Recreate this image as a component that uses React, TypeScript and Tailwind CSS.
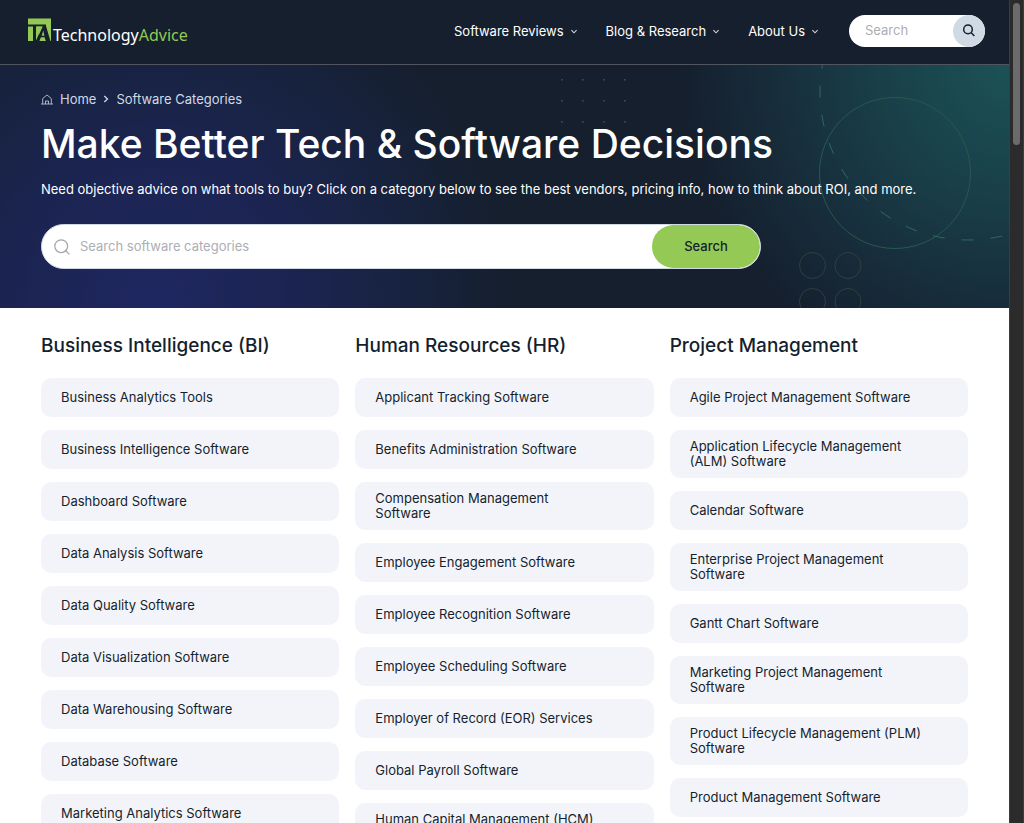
import React from "react";

type Column = { title: string; items: string[] };

const columns: Column[] = [
  {
    title: "Business Intelligence (BI)",
    items: [
      "Business Analytics Tools",
      "Business Intelligence Software",
      "Dashboard Software",
      "Data Analysis Software",
      "Data Quality Software",
      "Data Visualization Software",
      "Data Warehousing Software",
      "Database Software",
      "Marketing Analytics Software",
    ],
  },
  {
    title: "Human Resources (HR)",
    items: [
      "Applicant Tracking Software",
      "Benefits Administration Software",
      "Compensation Management\nSoftware",
      "Employee Engagement Software",
      "Employee Recognition Software",
      "Employee Scheduling Software",
      "Employer of Record (EOR) Services",
      "Global Payroll Software",
      "Human Capital Management (HCM) Software",
    ],
  },
  {
    title: "Project Management",
    items: [
      "Agile Project Management Software",
      "Application Lifecycle Management (ALM) Software",
      "Calendar Software",
      "Enterprise Project Management Software",
      "Gantt Chart Software",
      "Marketing Project Management Software",
      "Product Lifecycle Management (PLM) Software",
      "Product Management Software",
    ],
  },
];

const navItems = ["Software Reviews", "Blog & Research", "About Us"];

function Logo() {
  return (
    <a href="#" aria-label="TechnologyAdvice" className="flex items-start gap-px">
      <svg width="24" height="24" viewBox="0 0 24 24">
        <path d="M0 0.5H23V23H0Z" fill="#93c954" />
        <g fill="#151f2e">
          <path d="M0 6.6H18V8.6H8V23H5V8.6H0Z" />
          <path fillRule="evenodd" d="M15 8L8 23H11.6L13 19.4H16.6L17.6 23H22.4L18 8ZM13.7 17.8L15.3 12.6L16.4 17.8Z" />
          <path d="M8 23L11 16V23Z" />
        </g>
        <path d="M8.4 8.6H13.6L8.4 20Z" fill="#93c954" />
        <path d="M11.6 23L13 19.4H16.6L17.6 23Z" fill="#93c954" />
      </svg>
      <span className="mt-[5px] font-['Noto_Sans',sans-serif] text-base leading-6 text-white">
        Technology<span className="text-[#93c954]">Advice</span>
      </span>
    </a>
  );
}

function Chevron() {
  return (
    <svg width="8" height="8" viewBox="0 0 8 8" fill="none" stroke="#d5d8dc" strokeWidth="1.1">
      <path d="M1.4 3.2L4 5.8L6.6 3.2" />
    </svg>
  );
}

function Header() {
  return (
    <header className="flex h-[65px] items-start border-b border-[#50555f] bg-[#151f2e] pr-6 pl-7">
      <div className="mt-[18px]">
        <Logo />
      </div>
      <div className="mt-[15px] ml-auto flex items-center gap-[30px]">
        <nav className="flex items-center gap-7">
          {navItems.map((label) => (
            <button key={label} type="button" className="flex items-center gap-[6px] text-[13px] leading-5 text-white">
              {label}
              <Chevron />
            </button>
          ))}
        </nav>
        <form className="flex h-8 w-[136px] overflow-hidden rounded-full bg-white">
          <input
            type="text"
            aria-label="Search site"
            placeholder="Search"
            className="w-full min-w-0 flex-1 pl-4 text-[13px] text-[#151f2e] outline-none placeholder:text-[#acaeb4]"
          />
          <button type="button" aria-label="Submit search" className="flex size-8 items-center justify-center rounded-full bg-[#d0dae4]">
            <svg width="14" height="14" viewBox="0 0 14 14" fill="none" stroke="#151f2e" strokeWidth="1.5">
              <circle cx="6" cy="5.4" r="4.3" />
              <path d="M9 8.5L12.4 12" />
            </svg>
          </button>
        </form>
      </div>
    </header>
  );
}

function HeroArt() {
  const dots = [0, 1, 2].flatMap((r) => [0, 1, 2, 3].map((c) => ({ x: 22 + c * 21, y: 15 + r * 21 })));
  return (
    <svg aria-hidden="true" width="469" height="243" viewBox="0 0 469 243" fill="none" className="pointer-events-none absolute top-0 right-0">
      {dots.map((d) => (
        <rect key={`${d.x}-${d.y}`} x={d.x - 1} y={d.y - 1} width="1.6" height="1.6" fill="#28594f" />
      ))}
      <circle cx="355" cy="108" r="75.5" stroke="#26594f" />
      <path d="M282.5 0A148 148 0 0 0 469 169.2" stroke="#2b6a60" strokeDasharray="12 17" strokeDashoffset="8" />
      <g stroke="#2f403e">
        <circle cx="272.5" cy="200.5" r="13" />
        <circle cx="308" cy="200.5" r="13" />
        <circle cx="272.5" cy="236.5" r="13" />
        <circle cx="308" cy="236.5" r="13" />
      </g>
    </svg>
  );
}

function Hero() {
  return (
    <section className="relative overflow-hidden bg-[#151f2e] bg-[radial-gradient(circle_350px_at_155px_235px,#1f2761_0%,#1b2450_42%,#182342_68%,#151f2e00_100%),radial-gradient(circle_330px_at_100%_0%,#1c5257_0%,#193f49_40%,#172b39_75%,#151f2e00_100%)] px-[41px] pt-6 pb-[39px] text-white">
      <HeroArt />
      <div className="relative">
        <nav aria-label="Breadcrumb" className="flex items-center text-[13px] leading-5 text-[#d0dae4]">
          <svg width="12" height="12" viewBox="0 0 12 12" fill="none" stroke="#a9b3c2" className="mr-[7px]">
            <path d="M0 11H12M1.7 11V5.5L6 2L10.3 5.5V11M4.5 11V8H7.5V11" />
          </svg>
          <a href="#">Home</a>
          <svg width="6" height="8" viewBox="0 0 6 8" fill="none" stroke="currentColor" strokeWidth="1.3" className="mx-[7px]">
            <path d="M1.3 1L4.5 4L1.3 7" />
          </svg>
          <a href="#">Software Categories</a>
        </nav>
        <h1 className="mt-2.5 text-[39px] leading-[50px] font-medium">Make Better Tech &amp; Software Decisions</h1>
        <p className="mt-[10px] text-[13px] leading-5">
          Need objective advice on what tools to buy? Click on a category below to see the best vendors, pricing info, how to think about ROI, and more.
        </p>
        <form className="mt-[25px] flex h-[45px] max-w-[720px] items-stretch overflow-hidden rounded-full border border-[#d0dae4] bg-white">
          <label htmlFor="category-search" className="flex items-center pl-3">
            <svg role="img" aria-label="Search software categories" width="16" height="16" viewBox="0 0 16 16" fill="none" stroke="#a1a4aa" strokeWidth="1.2">
              <circle cx="7.2" cy="7.2" r="6.4" />
              <path d="M11 11L15.4 15.4" />
            </svg>
          </label>
          <input
            id="category-search"
            type="text"
            placeholder="Search software categories"
            className="min-w-0 flex-1 pl-[10px] text-[13px] text-[#151f2e] outline-none placeholder:text-[#acaeb4]"
          />
          <button type="button" className="w-[108px] rounded-full bg-[#93c954] text-[13px] font-medium text-[#151f2e]">
            Search
          </button>
        </form>
      </div>
    </section>
  );
}

function CategoryColumn({ title, items }: Column) {
  return (
    <section>
      <h2 className="text-[19px] leading-7 font-medium">{title}</h2>
      <ul className="mt-[18px] flex flex-col gap-[13px]">
        {items.map((item) => (
          <li key={item}>
            <a href="#" className="flex min-h-[39px] items-center rounded-[10px] bg-[#f3f4f9] py-[9px] pr-10 pl-5 text-[13px] leading-[15px] whitespace-pre-line">
              {item}
            </a>
          </li>
        ))}
      </ul>
    </section>
  );
}

export default function App() {
  return (
    <div className="flex h-screen overflow-hidden bg-white font-[Inter,sans-serif] text-[#151f2e]">
      <div className="h-full min-w-0 flex-1 overflow-y-auto [scrollbar-width:none]">
        <Header />
        <Hero />
        <main className="grid grid-cols-3 gap-4 px-[41px] pt-6">
          {columns.map((column) => (
            <CategoryColumn key={column.title} {...column} />
          ))}
        </main>
      </div>
      <div aria-hidden="true" className="w-[15px] shrink-0 border-x border-[#3d3d3d] bg-[#2b2b2b] px-[3px] pt-[3px]">
        <div className="h-[142px] rounded-full bg-[#6b6b6b]" />
      </div>
    </div>
  );
}
